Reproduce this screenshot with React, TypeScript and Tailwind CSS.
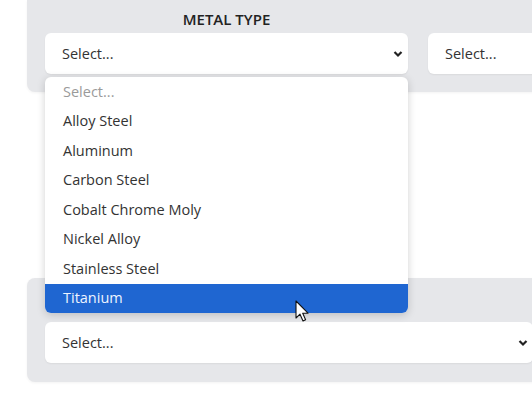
const metals = [
  "Alloy Steel",
  "Aluminum",
  "Carbon Steel",
  "Cobalt Chrome Moly",
  "Nickel Alloy",
  "Stainless Steel",
  "Titanium",
]

function Chevron() {
  return (
    <svg width="10" height="8" viewBox="0 0 10 8" className="shrink-0">
      <path d="M1.5 2 L5 5.5 L8.5 2" fill="none" stroke="#222" strokeWidth="2.2" />
    </svg>
  )
}

function SelectBox({ chevron = true }: { chevron?: boolean }) {
  return (
    <div className="flex h-[41px] items-center justify-between rounded-md bg-white pl-[17px] pr-[5px] text-[14.5px] text-[#333] shadow-[0_1px_2px_rgba(0,0,0,0.06)]">
      <span>Select...</span>
      {chevron && <Chevron />}
    </div>
  )
}

export default function App() {
  const font = { fontFamily: '"Open Sans", "Noto Sans", sans-serif' }
  return (
    <div className="relative h-[400px] w-[532px] overflow-hidden bg-white" style={font}>
      <div className="ml-[27px] w-[540px]">
        <div className="rounded-b-lg bg-[#e6e7ea] px-[18px] pb-[18px] pt-[9px] shadow-[0_1px_3px_rgba(0,0,0,0.05)]">
          <div className="grid grid-cols-[363px_1fr] gap-x-[20px]">
            <div className="flex flex-col gap-[3px]">
              <div className="text-center text-[15px] font-semibold leading-[21px] text-[#222]">METAL TYPE</div>
              <SelectBox />
            </div>
            <div className="flex flex-col gap-[3px]">
              <div className="h-[21px]" />
              <SelectBox chevron={false} />
            </div>
          </div>
        </div>

        <div className="mt-[186px] rounded-lg bg-[#e6e7ea] pb-[19px] pl-[18px] pr-[34px] pt-[16px] shadow-[0_1px_3px_rgba(0,0,0,0.05)]">
          <div className="flex flex-col gap-[7px]">
            <div className="text-center text-[15px] font-semibold leading-[21px] text-[#555]">MINIMUM DIAMETER</div>
            <SelectBox />
          </div>
        </div>
      </div>

      <div className="absolute left-[45px] top-[77px] w-[363px] overflow-hidden rounded-md bg-white shadow-[0_2px_8px_rgba(0,0,0,0.18)]">
        <div className="flex h-[29.5px] items-center pl-[18px] text-[14.5px] text-[#9a9a9a]">Select...</div>
        {metals.map((m) => (
          <div
            key={m}
            className={
              m === "Titanium"
                ? "flex h-[29.5px] items-center bg-[#1f66d1] pl-[18px] text-[14.5px] text-[#eef4ff]"
                : "flex h-[29.5px] items-center pl-[18px] text-[14.5px] text-[#333]"
            }
          >
            {m}
          </div>
        ))}
      </div>

      <svg className="absolute left-[295px] top-[300px]" width="16" height="24" viewBox="0 0 16 24">
        <path
          d="M1 1 L1 18 L5 14.2 L8 21 L10.6 19.8 L7.7 13.2 L13 13.2 Z"
          fill="#fff"
          stroke="#111"
          strokeWidth="1.1"
          strokeLinejoin="round"
        />
      </svg>
    </div>
  )
}
